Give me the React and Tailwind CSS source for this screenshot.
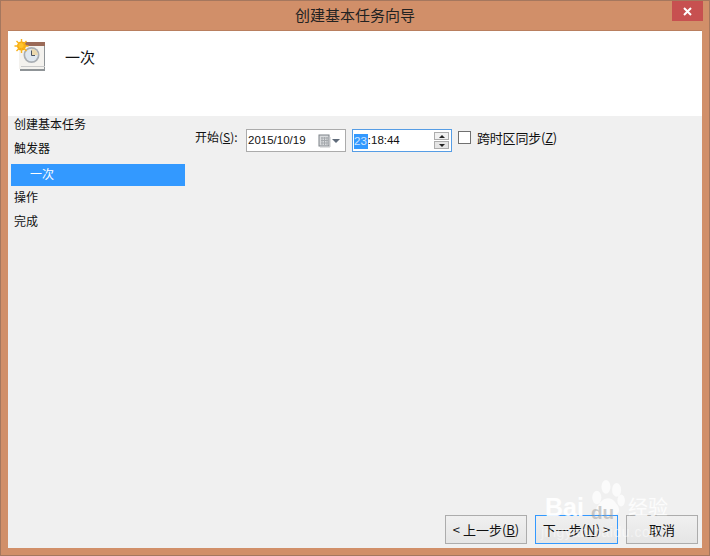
import React from "react";

const font = { fontFamily: '"Noto Sans CJK SC", "Liberation Sans", sans-serif' };
const numFont = { fontFamily: '"Liberation Sans", sans-serif' };
const wmFont = { fontFamily: '"Liberation Sans", sans-serif' };

function ClockIcon() {
  return (
    <svg width="32" height="32" viewBox="0 0 32 32" className="block">
      <rect x="6" y="7" width="25" height="25" fill="#8f9497" />
      <rect x="5" y="6" width="25" height="24" fill="#f4f2ee" />
      <rect x="7" y="27" width="24" height="1" fill="#c9c9c9" />
      <rect x="8" y="3" width="23" height="4" fill="#9a6a58" />
      <circle cx="17.5" cy="16" r="8" fill="#a9aeb3" />
      <circle cx="17.5" cy="16" r="6.3" fill="#dfe7ef" />
      <path d="M17.5 9.7a6.3 6.3 0 0 1 6.3 6.3h-6.3z" fill="#ecd9ae" />
      <path d="M17.5 11.5v5h3.5" fill="none" stroke="#4b5563" strokeWidth="1" />
      <circle cx="7.5" cy="7" r="4.5" fill="#f7a90f" />
      <path
        d="M7.5 0v14M0.5 7h14M2.5 2l10 10M12.5 2l-10 10"
        stroke="#f9b31a"
        strokeWidth="1.4"
      />
      <circle cx="7" cy="6.5" r="2.5" fill="#ffc42c" />
    </svg>
  );
}

function CalendarIcon() {
  return (
    <svg width="13" height="14" viewBox="0 0 13 14" className="block">
      <rect x="1" y="1" width="10" height="11" fill="#d9dbdd" stroke="#7d8288" />
      <path
        d="M3 4h7M3 6.5h7M3 9h7M4 3v8M6.5 3v8M9 3v8"
        stroke="#a4a8ac"
        strokeWidth="1"
      />
      <path d="M2 13h10V3" fill="none" stroke="#c4c6c8" />
    </svg>
  );
}

// baidu jingyan watermark over the bottom right corner
function Watermark() {
  return (
    <div className="absolute left-[543px] top-[478px] w-[167px] h-[78px] pointer-events-none">
      <svg width="42" height="38" viewBox="14 2 46 50" className="absolute left-[44px] top-[1px]">
        <g fill="#ffffff" fillOpacity="0.7">
          <ellipse cx="21" cy="25" rx="6" ry="9" />
          <ellipse cx="33" cy="11" rx="6" ry="9" />
          <ellipse cx="47" cy="15" rx="6" ry="9" />
          <ellipse cx="53" cy="29" rx="5" ry="8" />
          <path d="M36 26c6 0 9 5 12 9 3 4 4 12-4 13-4 0-6-1-9-1s-6 2-10 1c-6-2-6-8-3-12 3-4 7-10 14-10z" />
        </g>
      </svg>
      <span className="absolute left-[1px] top-[13px] text-[25px] leading-[30px] font-bold text-white/90" style={wmFont}>
        Bai
      </span>
      <span className="absolute left-[47px] top-[23px] text-[19px] leading-[22px] font-bold text-[#9a9a9a]/50" style={wmFont}>
        du
      </span>
      <span className="absolute left-[84px] top-[15px] text-[20px] leading-[26px] text-white/80" style={font}>
        经验
      </span>
      <span className="absolute left-[-3px] top-[45px] text-[14px] leading-[16px] tracking-[0.5px] text-white/50 whitespace-nowrap" style={wmFont}>
        jingyan.baidu.com
      </span>
    </div>
  );
}

export default function App() {
  const navItems = [
    { label: "创建基本任务" },
    { label: "触发器" },
    { label: "一次", active: true },
    { label: "操作" },
    { label: "完成" },
  ];

  return (
    <div
      className="relative w-[710px] h-[556px] overflow-hidden flex flex-col bg-[#d18f69] border border-[#a5775e] text-[#111] text-[12px]"
      style={font}
    >
      {/* title bar */}
      <div className="relative h-[29px] shrink-0 flex items-center justify-center text-[15px] text-[#222]">
        创建基本任务向导
        <div className="absolute right-[6px] top-0 w-[31px] h-[20px] bg-[#c75050] flex items-center justify-center">
          <svg width="9" height="9" viewBox="0 0 9 9">
            <path d="M1 1l7 7M8 1l-7 7" stroke="#fff" strokeWidth="2" />
          </svg>
        </div>
      </div>

      <div className="mx-[7px] h-[518px] flex flex-col bg-[#f0f0f0] border-t border-[#b97f5f]">
        {/* header */}
        <div className="h-[85px] shrink-0 bg-white flex items-start pt-[8px] pl-[6px]">
          <ClockIcon />
          <div className="ml-[19px] mt-[8px] text-[15px] leading-[20px]">一次</div>
        </div>

        <div className="flex-1 flex min-h-0">
          {/* nav */}
          <div className="w-[177px] shrink-0 pl-[3px] flex flex-col -mt-[4px]">
            {navItems.map((item) =>
              item.active ? (
                <div
                  key={item.label}
                  className="h-[22px] mt-[4px] -mb-[1px] pb-[3px] bg-[#3399ff] text-white pl-[19px] flex items-center text-[12px]"
                >
                  {item.label}
                </div>
              ) : (
                <div key={item.label} className="h-[24px] pl-[3px] flex items-center text-[12px]">
                  {item.label}
                </div>
              )
            )}
          </div>

          {/* form */}
          <div className="flex-1 flex items-start pt-[13px] pl-[10px]">
            <div className="text-[12px] leading-[16px] w-[51px]">
              开始(<span className="underline">S</span>):
            </div>
            <div className="w-[100px] h-[23px] bg-white border border-[#ababab] flex items-center pl-[1px] pt-[1px] text-[11.5px]" style={numFont}>
              <span className="flex-1">2015/10/19</span>
              <CalendarIcon />
              <svg width="8" height="4" viewBox="0 0 8 4" className="ml-[1px] mr-[5px]">
                <path d="M0 0h8L4 4z" fill="#5f6b7a" />
              </svg>
            </div>
            <div className="ml-[6px] w-[100px] h-[23px] bg-white border border-[#569de5] flex items-center pl-[1px] text-[11.5px]" style={numFont}>
              <span className="bg-[#3399ff] text-[#cfe6ff] h-[15px] leading-[15px] mt-[1px] pr-[1px]">23</span>
              <span className="mt-[1px]">:18:44</span>
              <div className="ml-auto mr-[2px] flex flex-col gap-[1px]">
                <div className="w-[15px] h-[8px] bg-[#f0f0f0] border border-[#acacac] flex items-center justify-center">
                  <svg width="6" height="3" viewBox="0 0 6 3"><path d="M3 0l3 3H0z" fill="#222" /></svg>
                </div>
                <div className="w-[15px] h-[8px] bg-[#e5e5e5] border border-[#acacac] flex items-center justify-center">
                  <svg width="6" height="3" viewBox="0 0 6 3"><path d="M0 0h6L3 3z" fill="#222" /></svg>
                </div>
              </div>
            </div>
            <div className="ml-[6px] mt-[2px] w-[13px] h-[13px] bg-white border border-[#707070]" />
            <div className="ml-[6px] text-[13px] leading-[17px] tracking-[-0.2px]">
              跨时区同步(<span className="underline">Z</span>)
            </div>
          </div>
        </div>

        {/* footer buttons */}
        <div className="h-[44px] shrink-0 flex items-start justify-end pr-[4px] pt-[11px] text-[13px]">
          <button className="w-[82px] h-[29px] bg-gradient-to-b from-[#f0f0f0] to-[#e5e5e5] border border-[#acacac]">
            &lt; 上一步(<span className="underline">B</span>)
          </button>
          <button className="ml-[8px] w-[83px] h-[29px] bg-gradient-to-b from-[#f0f0f0] to-[#e5e5e5] border border-[#3399ff]">
            下一步(<span className="underline">N</span>) &gt;
          </button>
          <button className="ml-[8px] w-[72px] h-[29px] bg-gradient-to-b from-[#f0f0f0] to-[#e5e5e5] border border-[#acacac]">
            取消
          </button>
        </div>
      </div>

      <Watermark />
    </div>
  );
}
